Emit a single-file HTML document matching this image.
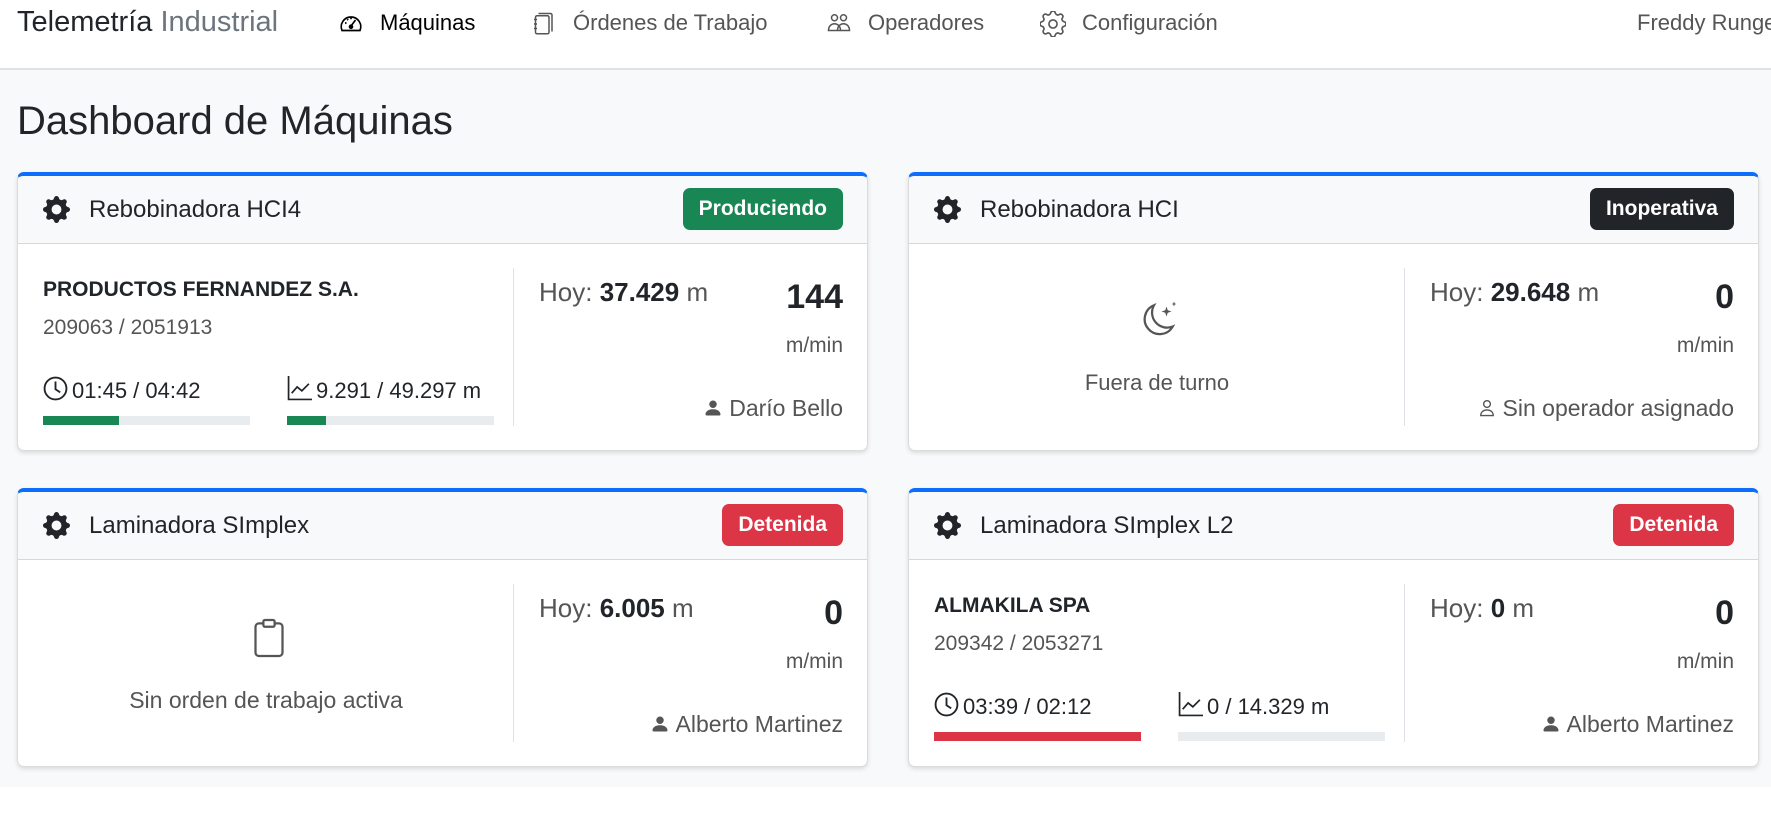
<!DOCTYPE html>
<html><head><meta charset="utf-8">
<style>
*{box-sizing:border-box;margin:0;padding:0}
body{width:1771px;height:836px;overflow:hidden;background:#fff;font-family:"Liberation Sans",sans-serif;color:#212529;position:relative}
.nav{position:absolute;left:0;top:0;width:1771px;height:70px;background:#fff;border-bottom:2px solid #dee2e6}
.main{position:absolute;left:0;top:70px;width:1771px;height:717px;background:#f8f9fa}
.abs{position:absolute;white-space:nowrap}
.navi{position:absolute;top:9px;font-size:22px;color:#555;line-height:28px}
.navi svg{position:absolute;left:-42px;top:2px}
.card{position:absolute;width:851px;height:279px;background:#fff;border:1px solid #dcdcdc;border-top:4px solid #0d6efd;border-radius:7px;box-shadow:0 2px 4px rgba(0,0,0,.12);overflow:hidden}
.hdr{position:absolute;left:0;top:0;width:100%;height:68px;background:#f8f9fa;border-bottom:1px solid #d6d8db}
.ttl{position:absolute;left:71px;top:20px;font-size:24px;line-height:28px}
.gear{position:absolute;left:25px;top:20px}
.badge{position:absolute;right:24px;top:12px;height:42px;border-radius:7px;color:#fff;font-weight:bold;font-size:21px;line-height:42px;padding:0 16px}
.div{position:absolute;left:495px;top:92px;width:1px;height:158px;background:#dee2e6}
.hoy{position:absolute;left:521px;top:101px;font-size:26px;color:#555;line-height:30px}
.hoy b{color:#212529}
.big{position:absolute;right:24px;top:103px;font-size:34px;font-weight:bold;line-height:36px}
.mmin{position:absolute;right:24px;top:158px;font-size:21px;color:#555}
.op{position:absolute;right:24px;top:219px;font-size:23px;color:#555;line-height:26px}
.op svg{vertical-align:-2px;margin-right:6px}
.comp{position:absolute;left:25px;top:101px;font-size:21px;font-weight:bold;line-height:26px}
.num{position:absolute;left:25px;top:139px;font-size:21px;color:#555;line-height:26px}
.met{position:absolute;top:200px;font-size:22px;line-height:28px}
.met svg{vertical-align:-3px;margin-right:4px}
.bar{position:absolute;top:240px;width:207px;height:9px;background:#e9ecef}
.bar i{display:block;height:100%}
.ctr{position:absolute;left:0;width:496px;text-align:center;font-size:23px;color:#555}
</style></head><body>
<div class="nav">
  <div class="abs" style="left:17px;top:4px;font-size:29px;line-height:36px">Telemetría <span style="color:#6c757d">Industrial</span></div>
  <div class="navi" style="left:380px;color:#000">Máquinas<svg width="26" height="24" viewBox="0 0 16 16" fill="none" stroke="#000" stroke-width="1.1"><path d="M2 13a6.5 6.5 0 1 1 12 0z"/><path d="M8 10l3-4"/><circle cx="8" cy="10.5" r="1" fill="#000"/><path d="M4 8h1M8 4.5v1M5.5 5.5l.6.6"/></svg></div>
  <div class="navi" style="left:573px">Órdenes de Trabajo<svg width="24" height="26" viewBox="0 0 16 16" fill="none" stroke="#555" stroke-width="1"><rect x="3" y="2.5" width="9" height="12" rx="1"/><path d="M5 1h8a1 1 0 0 1 1 1v11"/><path d="M2 5h2M2 8h2M2 11h2"/></svg></div>
  <div class="navi" style="left:868px">Operadores<svg width="26" height="24" viewBox="0 0 16 16" fill="none" stroke="#555" stroke-width="1"><circle cx="5" cy="4.5" r="2"/><circle cx="11" cy="4.5" r="2"/><path d="M1 13c0-3 2-4.5 4-4.5s4 1.5 4 4.5zM7 13c0-3 2-4.5 4-4.5s4 1.5 4 4.5H9"/></svg></div>
  <div class="navi" style="left:1082px">Configuración<svg width="26" height="26" viewBox="0 0 16 16" fill="none" stroke="#555" stroke-width="1"><circle cx="8" cy="8" r="2.5"/><path d="M9.4 1.1c-.4-1.4-2.4-1.4-2.8 0l-.1.3a1.5 1.5 0 0 1-2.1.9l-.3-.2C2.8 1.4 1.4 2.8 2.1 4.1l.2.3c.4.8 0 1.8-.9 2.1l-.3.1c-1.4.4-1.4 2.4 0 2.8l.3.1a1.5 1.5 0 0 1 .9 2.1l-.2.3c-.7 1.300.7 2.7 2 2l.3-.2a1.5 1.5 0 0 1 2.1.9l.1.3c.4 1.4 2.4 1.4 2.8 0l.1-.3a1.5 1.5 0 0 1 2.1-.9l.3.2c1.3.7 2.7-.7 2-2l-.2-.3a1.5 1.5 0 0 1 .9-2.1l.3-.1c1.4-.4 1.4-2.4 0-2.8l-.3-.1a1.5 1.5 0 0 1-.9-2.1l.2-.3c.7-1.3-.7-2.7-2-2l-.3.2a1.5 1.5 0 0 1-2.1-.9z"/></svg></div>
  <div class="abs" style="left:1637px;top:9px;font-size:22px;color:#555;line-height:28px">Freddy Runge</div>
</div>
<div class="main">
  <div class="abs" style="left:17px;top:27px;font-size:40px;line-height:48px">Dashboard de Máquinas</div>
</div>

<svg width="0" height="0" style="position:absolute"><defs>
<symbol id="gear" viewBox="0 0 16 16"><path fill="#212529" d="M9.405 1.05c-.413-1.4-2.397-1.4-2.81 0l-.1.34a1.464 1.464 0 0 1-2.105.872l-.31-.17c-1.283-.698-2.686.705-1.987 1.987l.169.311c.446.82.023 1.841-.872 2.105l-.34.1c-1.4.413-1.4 2.397 0 2.81l.34.1a1.464 1.464 0 0 1 .872 2.105l-.17.31c-.698 1.283.705 2.686 1.987 1.987l.311-.169a1.464 1.464 0 0 1 2.105.872l.1.34c.413 1.4 2.397 1.4 2.81 0l.1-.34a1.464 1.464 0 0 1 2.105-.872l.31.17c1.283.698 2.686-.705 1.987-1.987l-.169-.311a1.464 1.464 0 0 1 .872-2.105l.34-.1c1.4-.413 1.4-2.397 0-2.81l-.34-.1a1.464 1.464 0 0 1-.872-2.105l.17-.31c.698-1.283-.705-2.686-1.987-1.987l-.311.169a1.464 1.464 0 0 1-2.105-.872l-.1-.34zM8 10.93a2.929 2.929 0 1 1 0-5.86 2.929 2.929 0 0 1 0 5.858z"/></symbol>
<symbol id="pf" viewBox="0 0 16 16"><path fill="#555" d="M3 14s-1 0-1-1 1-4 6-4 6 3 6 4-1 1-1 1H3zm5-6a3 3 0 1 0 0-6 3 3 0 0 0 0 6z"/></symbol>
<symbol id="po" viewBox="0 0 16 16"><path fill="none" stroke="#555" stroke-width="1.1" d="M8 7.5a2.7 2.7 0 1 0 0-5.4 2.7 2.7 0 0 0 0 5.4zM3 14c0-2.8 2.3-4.5 5-4.5s5 1.7 5 4.5z"/></symbol>
<symbol id="clk" viewBox="0 0 16 16"><circle cx="8" cy="8" r="7" fill="none" stroke="#212529" stroke-width="1.2"/><path d="M8 3.5V8.5l3 2" fill="none" stroke="#212529" stroke-width="1.2"/></symbol>
<symbol id="chr" viewBox="0 0 16 16"><path d="M1 0v15h15M3 11l3.5-4 3 2.5L14 5" fill="none" stroke="#212529" stroke-width="1.1"/></symbol>
</defs></svg>

<!-- Card 1 -->
<div class="card" style="left:17px;top:172px">
  <div class="hdr"><svg class="gear" width="27" height="27"><use href="#gear"/></svg><div class="ttl">Rebobinadora HCI4</div><div class="badge" style="background:#198754">Produciendo</div></div>
  <div class="comp">PRODUCTOS FERNANDEZ S.A.</div>
  <div class="num">209063 / 2051913</div>
  <div class="met" style="left:25px"><svg width="25" height="25"><use href="#clk"/></svg>01:45 / 04:42</div>
  <div class="met" style="left:269px"><svg width="25" height="25"><use href="#chr"/></svg>9.291 / 49.297 m</div>
  <div class="bar" style="left:25px"><i style="width:76px;background:#198754"></i></div>
  <div class="bar" style="left:269px"><i style="width:39px;background:#198754"></i></div>
  <div class="div"></div>
  <div class="hoy">Hoy: <b>37.429</b> m</div>
  <div class="big">144</div>
  <div class="mmin">m/min</div>
  <div class="op"><svg width="20" height="20"><use href="#pf"/></svg>Darío Bello</div>
</div>

<!-- Card 2 -->
<div class="card" style="left:908px;top:172px">
  <div class="hdr"><svg class="gear" width="27" height="27"><use href="#gear"/></svg><div class="ttl">Rebobinadora HCI</div><div class="badge" style="background:#212529">Inoperativa</div></div>
  <svg class="abs" style="left:230px;top:122px" width="40" height="42" viewBox="0 0 16 16" fill="none" stroke="#555" stroke-width="0.9"><path d="M6 2.5A6 6 0 0 0 13.5 11 6 6 0 1 1 6 2.5z"/><path fill="#555" stroke="none" d="M11 3l.5 1.5L13 5l-1.5.5L11 7l-.5-1.5L9 5l1.5-.5zM14 1l.3.8.7.2-.7.2-.3.8-.3-.8L13 2l.7-.2z"/></svg>
  <div class="ctr" style="top:194px;font-size:22px">Fuera de turno</div>
  <div class="div"></div>
  <div class="hoy">Hoy: <b>29.648</b> m</div>
  <div class="big">0</div>
  <div class="mmin">m/min</div>
  <div class="op"><svg width="20" height="20"><use href="#po"/></svg>Sin operador asignado</div>
</div>

<!-- Card 3 -->
<div class="card" style="left:17px;top:488px">
  <div class="hdr"><svg class="gear" width="27" height="27"><use href="#gear"/></svg><div class="ttl">Laminadora SImplex</div><div class="badge" style="background:#dc3545">Detenida</div></div>
  <svg class="abs" style="left:233px;top:125px" width="36" height="42" viewBox="0 0 16 18" fill="none" stroke="#555" stroke-width="1"><rect x="2" y="2.5" width="12" height="14.5" rx="1.5"/><rect x="5.5" y="1" width="5" height="3" rx=".7" fill="#fff"/></svg>
  <div class="ctr" style="top:195px">Sin orden de trabajo activa</div>
  <div class="div"></div>
  <div class="hoy">Hoy: <b>6.005</b> m</div>
  <div class="big">0</div>
  <div class="mmin">m/min</div>
  <div class="op"><svg width="20" height="20"><use href="#pf"/></svg>Alberto Martinez</div>
</div>

<!-- Card 4 -->
<div class="card" style="left:908px;top:488px">
  <div class="hdr"><svg class="gear" width="27" height="27"><use href="#gear"/></svg><div class="ttl">Laminadora SImplex L2</div><div class="badge" style="background:#dc3545">Detenida</div></div>
  <div class="comp">ALMAKILA SPA</div>
  <div class="num">209342 / 2053271</div>
  <div class="met" style="left:25px"><svg width="25" height="25"><use href="#clk"/></svg>03:39 / 02:12</div>
  <div class="met" style="left:269px"><svg width="25" height="25"><use href="#chr"/></svg>0 / 14.329 m</div>
  <div class="bar" style="left:25px"><i style="width:100%;background:#dc3545"></i></div>
  <div class="bar" style="left:269px"></div>
  <div class="div"></div>
  <div class="hoy">Hoy: <b>0</b> m</div>
  <div class="big">0</div>
  <div class="mmin">m/min</div>
  <div class="op"><svg width="20" height="20"><use href="#pf"/></svg>Alberto Martinez</div>
</div>
</body></html>
